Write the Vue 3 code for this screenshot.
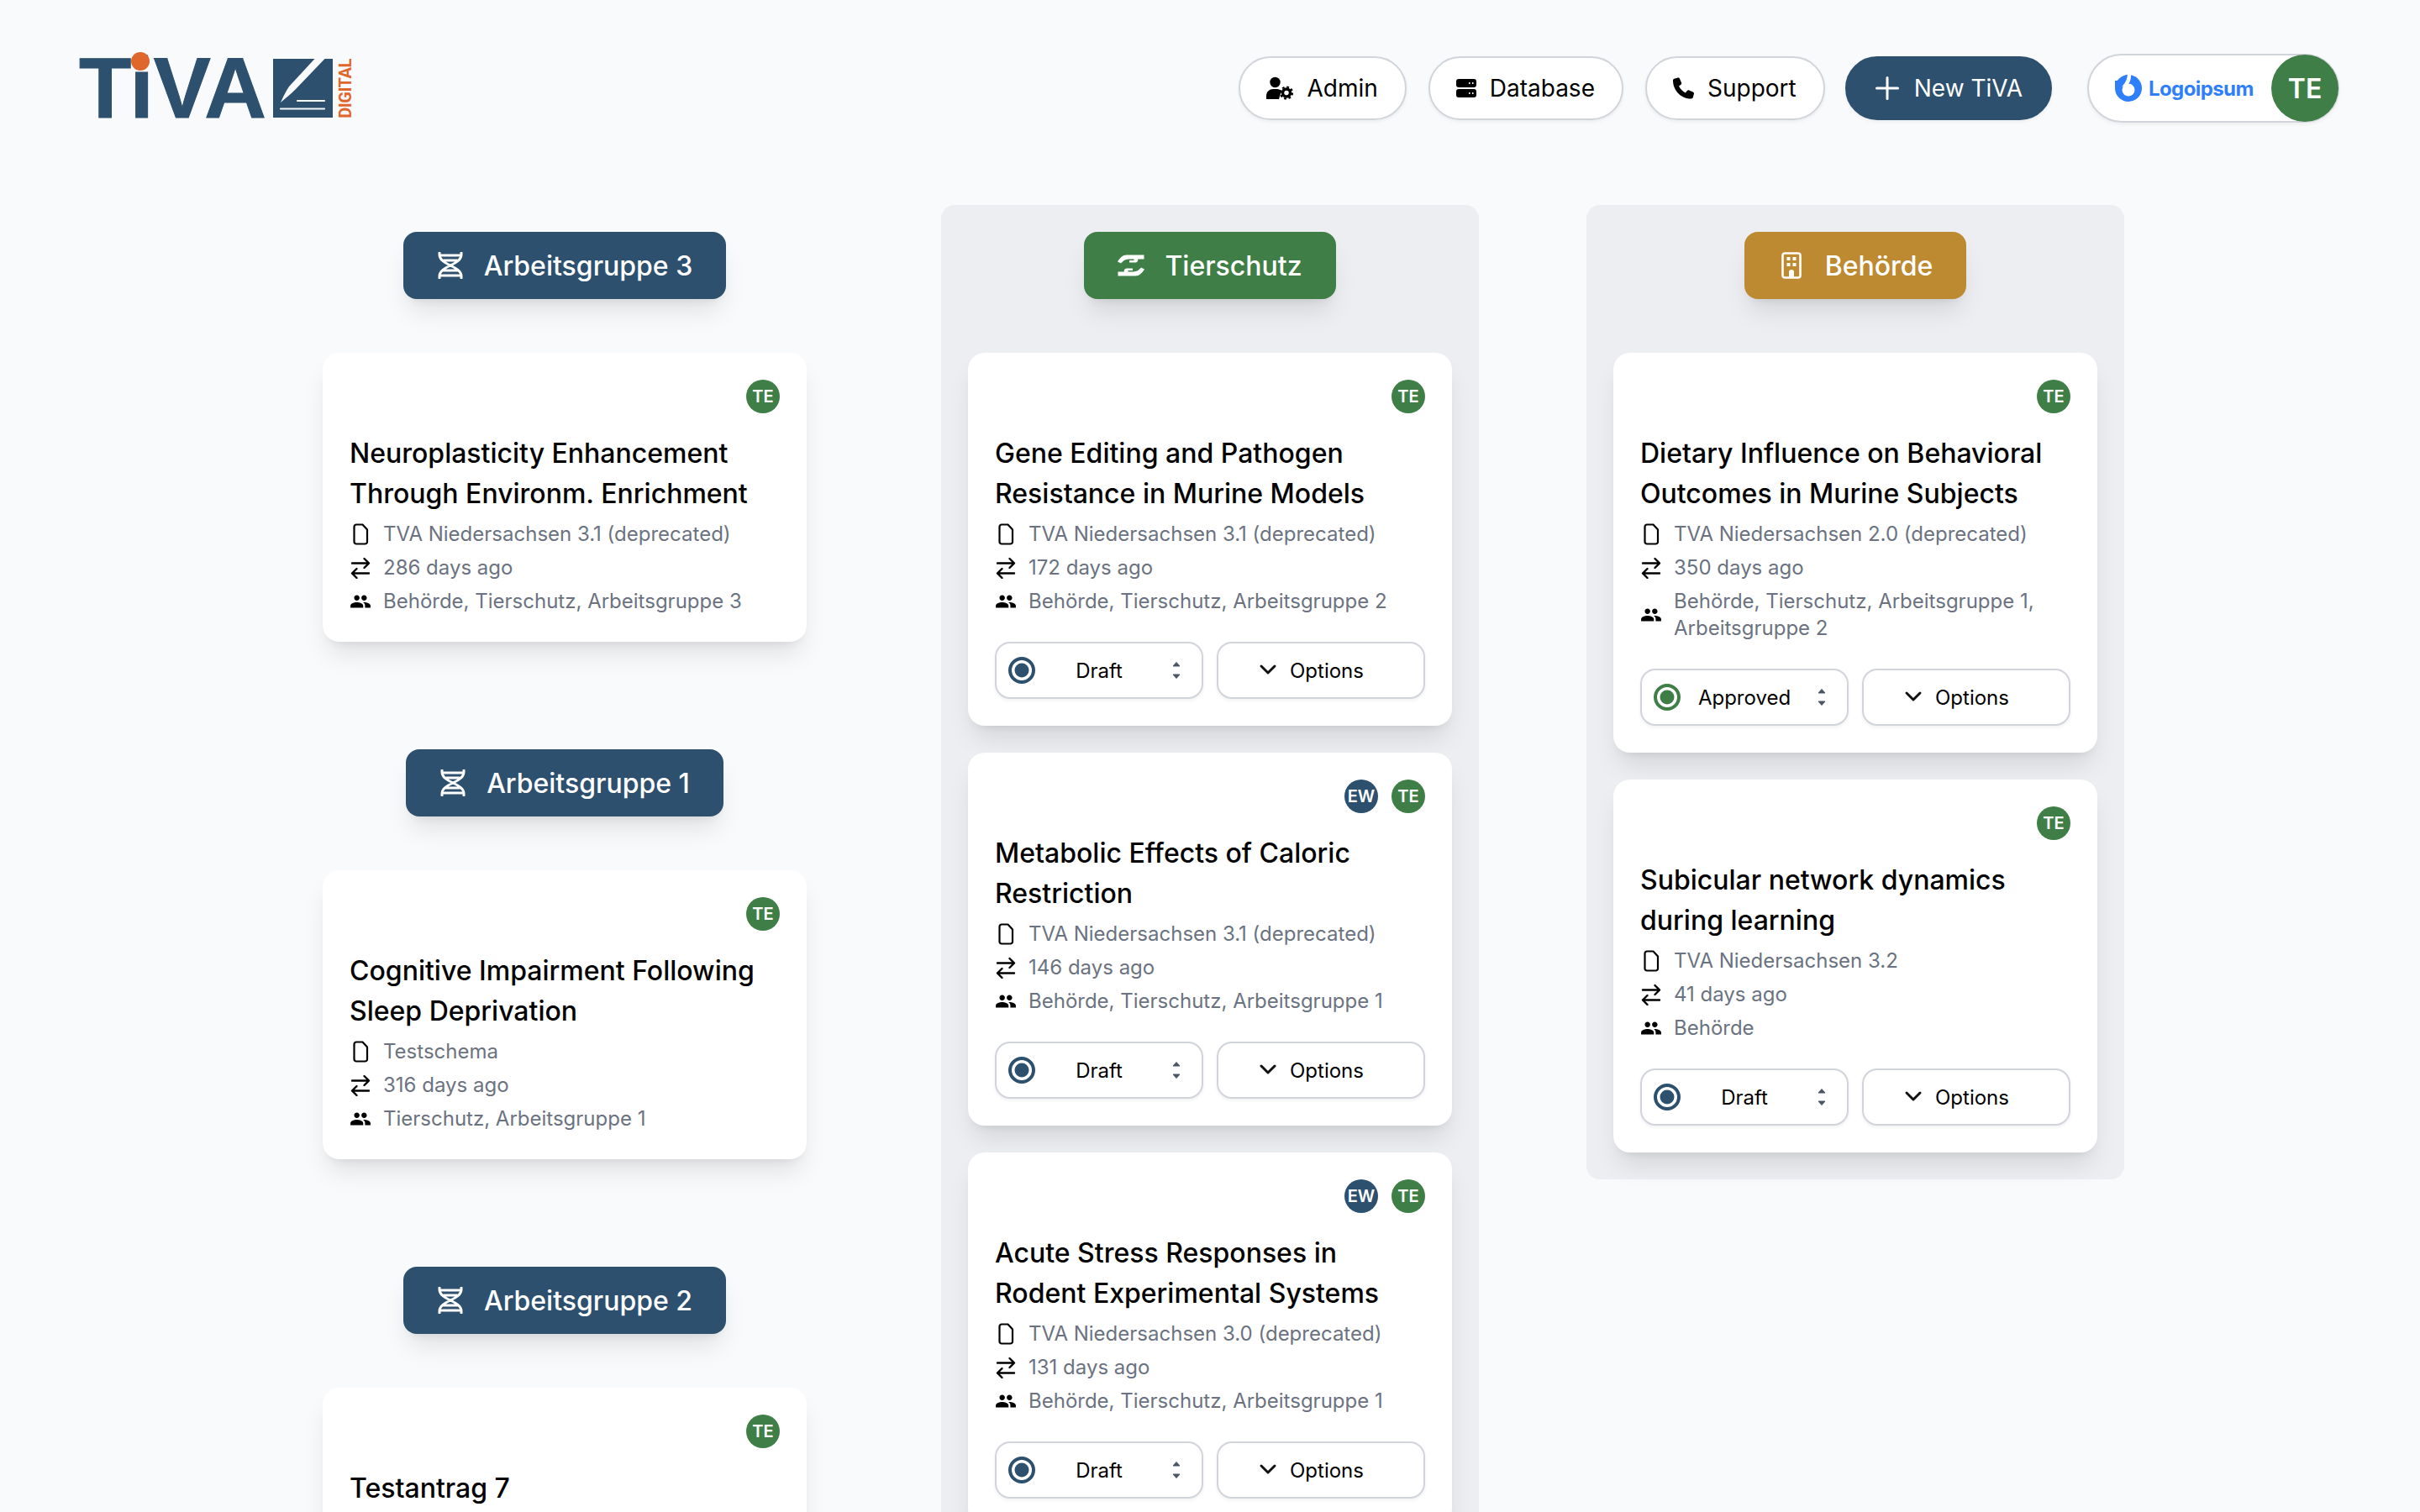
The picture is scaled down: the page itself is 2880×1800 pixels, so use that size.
<template>
  <div class="page">
    <svg class="defs" width="0" height="0" aria-hidden="true">
      <symbol id="i-dna" viewBox="0 0 32 32">
        <path d="M29 1v2c0 6-5 9-13 13c-8 4-13 7-13 13v2M3 1v2c0 6 5 9 13 13c8 4 13 7 13 13v2M3 4h26M3 28h26M8 10h16M8 22h16" fill="none" stroke="currentColor" stroke-width="3" stroke-linecap="round" stroke-linejoin="round" />
      </symbol>
      <symbol id="i-hands" viewBox="0 -2 32 32">
        <path d="M0 9.500C3 5 6 1.500 11 1.500H31.500V6.500H24C25 8.500 23 11 20 10.500H14V8H19C20 8 20 6.500 19 6.500H13C9 6.500 6 9 4 11.500Z" fill="currentColor" />
        <path d="M0 9.500C3 5 6 1.500 11 1.500H31.500V6.500H24C25 8.500 23 11 20 10.500H14V8H19C20 8 20 6.500 19 6.500H13C9 6.500 6 9 4 11.500Z" fill="currentColor" transform="rotate(180 16 14)" />
      </symbol>
      <symbol id="i-building" viewBox="0 0 24 32">
        <path d="M4 1.500h16a2.500 2.500 0 0 1 2.500 2.500v24a2.500 2.500 0 0 1-2.500 2.500H4A2.500 2.500 0 0 1 1.500 28V4A2.500 2.500 0 0 1 4 1.500z" fill="none" stroke="currentColor" stroke-width="2.600" />
        <path d="M6.500 6h4v4h-4zM13.500 6h4v4h-4zM6.500 13h4v4h-4zM13.500 13h4v4h-4zM9 31v-7a3 3 0 0 1 6 0v7z" fill="currentColor" />
      </symbol>
      <symbol id="i-file" viewBox="0 0 26 26">
        <path d="M8 1.500h7.500L21 7.500V22a2.500 2.500 0 0 1-2.500 2.500H8A2.500 2.500 0 0 1 5.500 22V4A2.500 2.500 0 0 1 8 1.500z" fill="none" stroke="currentColor" stroke-width="2.200" stroke-linejoin="round" />
      </symbol>
      <symbol id="i-swap" viewBox="0 0 26 26">
        <path d="M3 7.500h20M17.500 2l5.500 5.500-5.500 5.500M23 19.500H3M8.500 14L3 19.500 8.500 25" fill="none" stroke="currentColor" stroke-width="2.400" stroke-linecap="round" stroke-linejoin="round" />
      </symbol>
      <symbol id="i-people" viewBox="0 0 24 24">
        <path d="M16 11c1.660 0 2.990-1.340 2.990-3S17.660 5 16 5c-1.660 0-3 1.340-3 3s1.340 3 3 3zm-8 0c1.660 0 2.990-1.340 2.990-3S9.660 5 8 5C6.340 5 5 6.340 5 8s1.340 3 3 3zm0 2c-2.330 0-7 1.170-7 3.500V19h14v-2.500c0-2.330-4.670-3.500-7-3.500zm8 0c-.29 0-.62.020-.97.050 1.160.84 1.970 1.970 1.970 3.450V19h6v-2.500c0-2.330-4.670-3.500-7-3.500z" fill="currentColor" />
      </symbol>
    </svg>

    <header class="topbar">
      <div class="logo">
        <div class="logo-word">TiVA<span class="logo-dot" /></div>
        <svg class="logo-box" width="71" height="70" viewBox="0 0 71 70">
          <rect width="71" height="70" fill="#2d506e" />
          <path d="M49.500 0H61.500L27 36C22 41 15 47 9 52C12 45 15 39 19 33Z" fill="#f9fafc" />
          <path d="M29 50H61M9 59.500H61" stroke="#f9fafc" stroke-width="2.200" stroke-linecap="round" />
        </svg>
        <span class="logo-digital">DIGITAL</span>
      </div>

      <nav class="nav">
        <button class="nav-btn">
          <svg width="32" height="28" viewBox="0 0 32 28">
            <circle cx="10.500" cy="7" r="6.200" fill="#000" />
            <path d="M0 27v-4c0-5 4-8 8-8h5c2 0 4 1 5 2l-3 10z" fill="#000" />
            <circle cx="24" cy="19.500" r="4.500" fill="none" stroke="#000" stroke-width="3.500" />
            <circle cx="24" cy="19.500" r="7" fill="none" stroke="#000" stroke-width="2.200" stroke-dasharray="2.800 2.700" />
          </svg>
          Admin
        </button>
        <button class="nav-btn">
          <svg width="24" height="24" viewBox="0 0 24 24">
            <rect y="1" width="24" height="10" rx="3" fill="#000" />
            <rect y="13" width="24" height="10" rx="3" fill="#000" />
            <path d="M15 6h1.500M19 6h1.500M15 18h1.500M19 18h1.500" stroke="#fff" stroke-width="1.800" />
          </svg>
          Database
        </button>
        <button class="nav-btn">
          <svg width="25" height="26" viewBox="0 0 512 512">
            <path d="M164.900 24.600c-7.700-18.600-28-28.500-47.400-23.200l-88 24C12.100 30.200 0 46 0 64C0 311.400 200.600 512 448 512c18 0 33.800-12.100 38.600-29.500l24-88c5.300-19.400-4.600-39.700-23.200-47.400l-96-40c-16.300-6.800-35.200-2.100-46.300 11.600L304.700 368C234.300 334.700 177.300 277.700 144 207.300L193.300 167c13.700-11.200 18.400-30 11.600-46.300l-40-96z" fill="#000" />
          </svg>
          Support
        </button>
        <button class="nav-btn nav-primary">
          <svg width="32" height="32" viewBox="0 0 32 32">
            <path d="M16 3.500v25M3.500 16h25" stroke="#fff" stroke-width="3" stroke-linecap="round" />
          </svg>
          New TiVA
        </button>
      </nav>

      <div class="profile">
        <span class="company">
          <svg width="32" height="32" viewBox="0 0 32 32">
            <circle cx="16" cy="16" r="16" fill="#2f7ffb" />
            <path d="M0 16V7C6 7 11 5 14 0H18V12Z" fill="#2f7ffb" />
            <circle cx="16" cy="18" r="7.500" fill="#fff" />
            <path d="M15 -1h4C19.500 6 17 11 13 14C11 13 9 13.500 7 15.500C11 11 14.500 7 15 -1z" fill="#fff" />
          </svg>
          <span class="company-name">Logoipsum</span>
        </span>
        <span class="profile-avatar">TE</span>
      </div>
    </header>

    <main class="board">
      <div v-for="(col, i) in columns" :key="i" class="column">
        <section v-for="g in col" :key="g.name" class="group" :class="{ 'group-panel': g.panel }">
          <div class="group-pill" :class="g.tone">
            <span class="pill-icon"><svg :width="g.iconW" height="32"><use :href="'#' + g.icon" /></svg></span>
            {{ g.name }}
          </div>
          <article v-for="c in g.cards" :key="c.title" class="card">
            <div class="card-avatars">
              <span v-for="a in c.users" :key="a" class="avatar" :class="a === 'EW' ? 'bg-navy' : 'bg-green'">{{ a }}</span>
            </div>
            <h3 class="card-title">{{ c.title }}</h3>
            <ul v-if="c.schema" class="meta">
              <li><svg width="26" height="26"><use href="#i-file" /></svg><span>{{ c.schema }}</span></li>
              <li><svg width="26" height="26"><use href="#i-swap" /></svg><span>{{ c.age }}</span></li>
              <li><svg width="26" height="26"><use href="#i-people" /></svg><span>{{ c.groups }}</span></li>
            </ul>
            <div v-if="c.status" class="actions">
              <div class="status">
                <svg width="32" height="32" viewBox="0 0 32 32" :class="c.status === 'Approved' ? 'ok' : 'draft'">
                  <circle cx="16" cy="16" r="14" fill="none" stroke="currentColor" stroke-width="4" />
                  <circle cx="16" cy="16" r="8.500" fill="currentColor" />
                </svg>
                <span class="status-label">{{ c.status }}</span>
                <svg class="updown" width="16" height="26" viewBox="0 0 16 26">
                  <path d="M8 3.500l4 4.500H4zM8 22.500l-4-4.500h8z" fill="#4b5563" stroke="#4b5563" stroke-linejoin="round" />
                </svg>
              </div>
              <button class="options">
                <svg width="32" height="20" viewBox="0 0 32 20">
                  <path d="M8 5l8 8 8-8" fill="none" stroke="#111" stroke-width="3" stroke-linecap="round" stroke-linejoin="round" />
                </svg>
                Options
              </button>
            </div>
          </article>
        </section>
      </div>
    </main>
  </div>
</template>

<script setup>
const columns = [
  [
    {
      name: 'Arbeitsgruppe 3', icon: 'i-dna', iconW: 32, tone: 'bg-navy',
      cards: [{
        title: 'Neuroplasticity Enhancement Through Environm. Enrichment', users: ['TE'],
        schema: 'TVA Niedersachsen 3.1 (deprecated)', age: '286 days ago', groups: 'Behörde, Tierschutz, Arbeitsgruppe 3'
      }]
    },
    {
      name: 'Arbeitsgruppe 1', icon: 'i-dna', iconW: 32, tone: 'bg-navy',
      cards: [{
        title: 'Cognitive Impairment Following Sleep Deprivation', users: ['TE'],
        schema: 'Testschema', age: '316 days ago', groups: 'Tierschutz, Arbeitsgruppe 1'
      }]
    },
    {
      name: 'Arbeitsgruppe 2', icon: 'i-dna', iconW: 32, tone: 'bg-navy',
      cards: [{ title: 'Testantrag 7', users: ['TE'] }]
    }
  ],
  [
    {
      name: 'Tierschutz', icon: 'i-hands', iconW: 32, tone: 'bg-green', panel: true,
      cards: [
        {
          title: 'Gene Editing and Pathogen Resistance in Murine Models', users: ['TE'],
          schema: 'TVA Niedersachsen 3.1 (deprecated)', age: '172 days ago', groups: 'Behörde, Tierschutz, Arbeitsgruppe 2', status: 'Draft'
        },
        {
          title: 'Metabolic Effects of Caloric Restriction', users: ['EW', 'TE'],
          schema: 'TVA Niedersachsen 3.1 (deprecated)', age: '146 days ago', groups: 'Behörde, Tierschutz, Arbeitsgruppe 1', status: 'Draft'
        },
        {
          title: 'Acute Stress Responses in Rodent Experimental Systems', users: ['EW', 'TE'],
          schema: 'TVA Niedersachsen 3.0 (deprecated)', age: '131 days ago', groups: 'Behörde, Tierschutz, Arbeitsgruppe 1', status: 'Draft'
        }
      ]
    }
  ],
  [
    {
      name: 'Behörde', icon: 'i-building', iconW: 24, tone: 'bg-gold', panel: true,
      cards: [
        {
          title: 'Dietary Influence on Behavioral Outcomes in Murine Subjects', users: ['TE'],
          schema: 'TVA Niedersachsen 2.0 (deprecated)', age: '350 days ago', groups: 'Behörde, Tierschutz, Arbeitsgruppe 1, Arbeitsgruppe 2', status: 'Approved'
        },
        {
          title: 'Subicular network dynamics during learning', users: ['TE'],
          schema: 'TVA Niedersachsen 3.2', age: '41 days ago', groups: 'Behörde', status: 'Draft'
        }
      ]
    }
  ]
]
</script>

<style>
html, body { margin: 0; background: #f9fafc; }
</style>

<style scoped>
.page {
  height: 100vh;
  overflow: hidden;
  box-sizing: border-box;
  background: #f9fafc;
  font-family: Inter, "Liberation Sans", sans-serif;
  color: #000;
}
.defs { position: absolute; }

.topbar {
  display: flex;
  align-items: center;
  justify-content: space-between;
  padding: 64px 96px 98px;
}

.logo { display: flex; align-items: center; height: 82px; }
.logo-word {
  position: relative;
  font: 700 102px/82px "Liberation Sans", Arial, sans-serif;
  color: #2d506e;
  -webkit-text-stroke: 1px #2d506e;
  margin-left: -2px;
}
.logo-dot {
  position: absolute;
  left: 63px;
  top: -1px;
  width: 20px;
  height: 20px;
  border-radius: 50%;
  background: #df672c;
  box-shadow: 0 0 0 1px #df672c;
}
.logo-box { margin-left: 8px; }
.logo-digital {
  writing-mode: vertical-rl;
  transform: rotate(180deg);
  margin-left: 5px;
  font: 700 20px/20px Roboto, sans-serif;
  letter-spacing: -0.4px;
  color: #df672c;
}

.nav { display: flex; align-items: center; gap: 26px; margin-left: auto; }
.nav-btn {
  display: inline-flex;
  align-items: center;
  gap: 16px;
  height: 76px;
  padding: 0 32px 0 31px;
  box-sizing: border-box;
  border: 2px solid #d1d5db;
  border-radius: 38px;
  background: #fff;
  box-shadow: 0 2px 4px rgba(0, 0, 0, 0.06);
  font: 400 28px Inter, sans-serif;
  color: #000;
  white-space: nowrap;
}
.nav-primary {
  margin-left: -2px;
  padding: 0 33px 0 32px;
  background: #2d506e;
  border-color: #2d506e;
  color: #fff;
}

.profile {
  display: flex;
  align-items: center;
  justify-content: space-between;
  width: 300px;
  height: 82px;
  box-sizing: border-box;
  margin-left: 42px;
  padding-left: 31px;
  border: 2px solid #d1d5db;
  border-radius: 41px;
  background: #fff;
  box-shadow: 0 2px 4px rgba(0, 0, 0, 0.06);
}
.company { display: flex; align-items: center; gap: 8px; }
.company-name { font: 700 24px Inter, sans-serif; color: #2f7ffb; letter-spacing: -0.6px; }
.profile-avatar {
  display: flex;
  align-items: center;
  justify-content: center;
  width: 80px;
  height: 80px;
  margin-right: -1px;
  border-radius: 50%;
  background: #3f7f47;
  color: #fff;
  font-size: 32px;
  font-weight: 600;
}

.board {
  display: grid;
  grid-template-columns: repeat(3, 640px);
  justify-content: center;
  align-items: start;
  gap: 128px;
}
.column { display: flex; flex-direction: column; gap: 64px; }
.group {
  display: flex;
  flex-direction: column;
  gap: 32px;
  padding: 32px;
  border-radius: 16px;
}
.group-panel { background: #eceef2; }

.group-pill {
  display: inline-flex;
  align-items: center;
  align-self: center;
  gap: 24px;
  height: 80px;
  margin-bottom: 32px;
  padding: 0 40px;
  border-radius: 16px;
  box-shadow: 0 20px 30px -6px rgba(0, 0, 0, 0.1), 0 8px 12px -8px rgba(0, 0, 0, 0.1);
  color: #fff;
  font-size: 32px;
  font-weight: 500;
}
.pill-icon { display: flex; justify-content: center; width: 32px; }
.bg-navy { background: #2d506e; }
.bg-green { background: #3f7f47; }
.bg-gold { background: #be8a31; }

.card {
  padding: 32px;
  border-radius: 20px;
  background: #fff;
  box-shadow: 0 20px 30px -6px rgba(0, 0, 0, 0.1), 0 8px 12px -8px rgba(0, 0, 0, 0.1);
}
.card-avatars { display: flex; justify-content: flex-end; gap: 16px; margin-bottom: 24px; }
.avatar {
  display: flex;
  align-items: center;
  justify-content: center;
  width: 40px;
  height: 40px;
  border-radius: 50%;
  color: #fff;
  font-size: 20px;
  font-weight: 600;
}
.card-title { margin: 0; font-size: 32px; line-height: 48px; font-weight: 500; color: #000; }

.meta {
  display: flex;
  flex-direction: column;
  gap: 8px;
  margin: 8px 0 0;
  padding: 0;
  list-style: none;
}
.meta li {
  display: flex;
  align-items: center;
  gap: 14px;
  font-size: 24px;
  line-height: 32px;
  color: #6b7280;
}
.meta svg { flex: none; color: #000; }

.actions { display: grid; grid-template-columns: 1fr 1fr; gap: 16px; margin-top: 32px; }
.status, .options {
  height: 68px;
  box-sizing: border-box;
  border: 2px solid #d1d5db;
  border-radius: 18px;
  background: #fff;
  box-shadow: 0 2px 4px rgba(0, 0, 0, 0.06);
  font: 400 24px Inter, sans-serif;
  color: #000;
}
.status {
  display: grid;
  grid-template-columns: 32px 1fr 32px;
  align-items: center;
  padding: 0 14px;
}
.status-label { text-align: center; }
.updown { justify-self: center; }
.draft { color: #2d506e; }
.ok { color: #3f7f47; }
.options {
  display: flex;
  align-items: center;
  justify-content: center;
  gap: 10px;
  padding: 0 28px 0 0;
}
</style>
